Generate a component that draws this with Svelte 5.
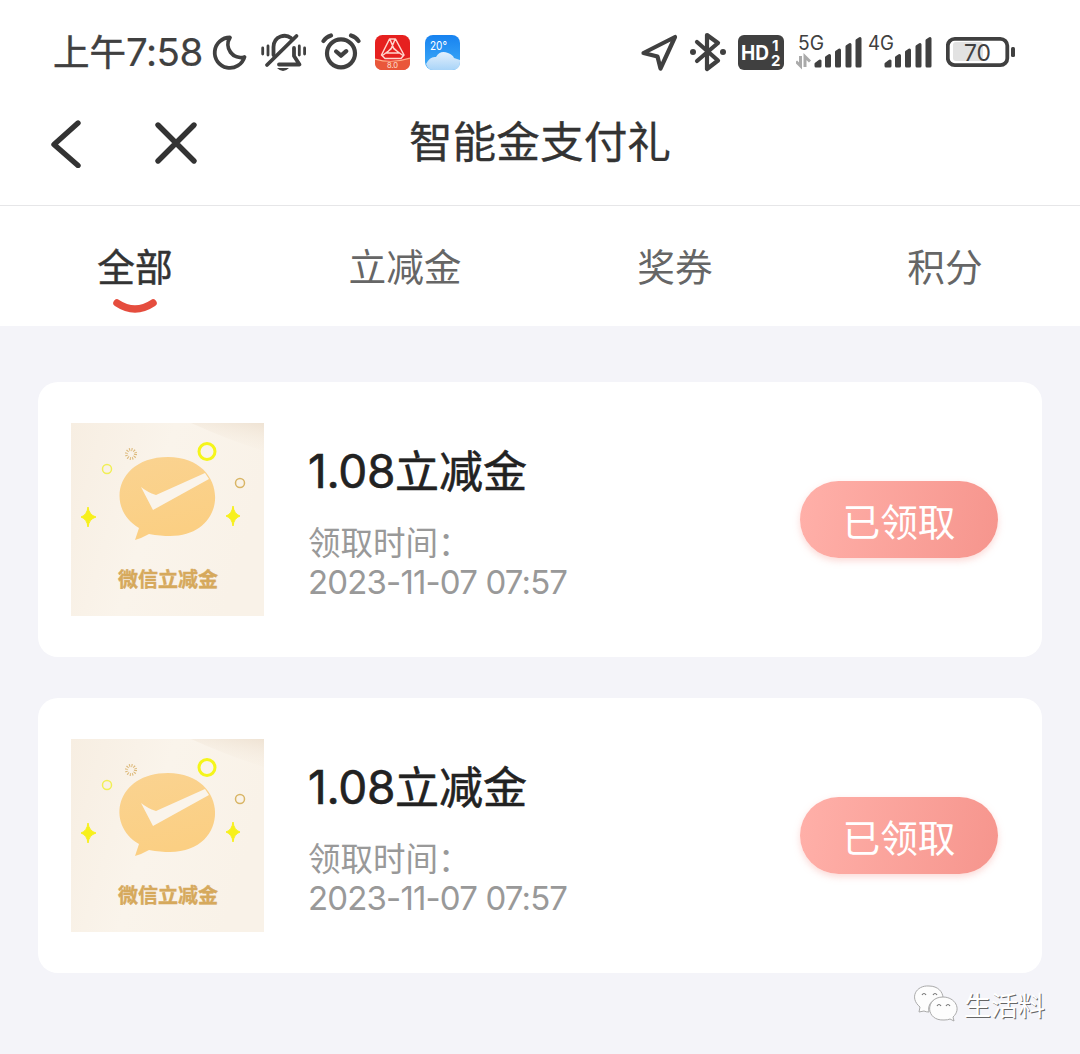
<script>
    const tabs = ['全部', '立减金', '奖券', '积分'];
    let active = $state('全部');

    const coupons = [
        { id: 1, title: '立减金', amount: '1.08', time: '2023-11-07 07:57', status: '已领取' },
        { id: 2, title: '立减金', amount: '1.08', time: '2023-11-07 07:57', status: '已领取' }
    ];

    const networks = ['5G', '4G'];
</script>

<main>
    <div class="status">
        <span class="clock">上午<b>7:58</b></span>
        <svg class="moon" width="36" height="44" viewBox="0 0 36 44">
            <path class="line" d="M18 7.5A15.2 15.2 0 1 0 32.5 27A13 13 0 0 1 18 7.5Z" />
        </svg>
        <svg class="mute" width="46" height="44" viewBox="0 0 46 44">
            <path class="line" d="M12.500 25V17C13 5 25 4 30 8M33 18V26L38.5 34.5H18" />
            <path class="line" d="M6 35L35.5 6" />
            <path class="line thin" d="M1.7 18v6M7 16v9M38.3 16v9M43.6 18v6" />
            <path fill="#404040" d="M16 38h12q-6 6-12 0z" />
        </svg>
        <svg class="alarm" width="40" height="44" viewBox="0 0 40 44">
            <circle class="line thick" cx="20" cy="23.3" r="14" />
            <path class="line thick" d="M2.5 11Q5 7 10 5.5M37.5 11Q35 7 30 5.5M15.2 21.5L20 25.7L25.2 21.2" />
        </svg>
        <svg class="app" width="35" height="35" viewBox="0 0 35 35">
            <rect width="35" height="35" rx="7.5" fill="#e6201f" />
            <path d="M0 24Q17 29 35 23V27.500Q35 35 27.500 35H7.500Q0 35 0 27.500Z" fill="#e9573a" />
            <path d="M0 24Q17 29 35 23" stroke="#ffb08a" stroke-width="1.200" fill="none" />
            <path d="M14.500 4H20.500L29 20L26 23.500H10L6.500 20ZM15 4.500L19 14L28 20.500M20 4.500L16 14L7.500 20.500M11.500 18H24L17.500 12Z" stroke="#ffd5cd" stroke-width="1.500" fill="none" stroke-linejoin="round" />
            <text x="17.500" y="33" font-size="7.500" text-anchor="middle" fill="#ffe3d8">8.0</text>
        </svg>
        <svg class="app weather" width="35" height="35" viewBox="0 0 35 35">
            <defs>
                <linearGradient id="sky" x2="0" y2="1"><stop stop-color="#1782f0" /><stop offset="1" stop-color="#40adf8" /></linearGradient>
                <linearGradient id="cloud" x2="0" y2="1"><stop stop-color="#e2effc" /><stop offset="1" stop-color="#a9d4f8" /></linearGradient>
            </defs>
            <rect width="35" height="35" rx="8" fill="url(#sky)" />
            <path d="M1 29Q5 21 11 22Q15 15 23 18Q28 20 29 23L35 25V27Q35 35 27 35H8Q3 35 1 29Z" fill="url(#cloud)" />
            <text x="5" y="15" font-size="12" fill="#fff" textLength="17" lengthAdjust="spacingAndGlyphs">20°</text>
        </svg>

        <svg class="locate" width="40" height="44" viewBox="0 0 40 44">
            <path class="line thick" d="M3.500 23L35 7L20.500 38.500L17.500 26.500Z" />
        </svg>
        <svg class="bluetooth" width="38" height="44" viewBox="0 0 38 44">
            <path class="line thick" d="M8 12L29 30.500L18 39V5L29 13L8 31" />
            <circle cx="4" cy="22" r="3" fill="#404040" />
            <circle cx="34" cy="22" r="3" fill="#404040" />
        </svg>
        <svg class="hd" width="46" height="35" viewBox="0 0 46 35">
            <rect width="46" height="35" rx="6" fill="#404040" />
            <text x="3" y="24.500" font-size="20" textLength="28" lengthAdjust="spacingAndGlyphs">HD</text>
            <text x="34" y="15.500" font-size="15">1</text>
            <text x="33" y="31" font-size="15">2</text>
        </svg>
        {#each networks as net, i}
            <svg class="signal" width="70" height="44" viewBox="0 0 70 44">
                <text x="2" y="20" font-size="19.500" fill="#404040" textLength="26" lengthAdjust="spacingAndGlyphs">{net}</text>
                {#if i === 0}
                    <path d="M4.500 26V36L0 31.500M9 37V26.500L14 31.500" fill="none" stroke="#aaa" stroke-width="3" />
                {/if}
                <path class="bars" d="M20 36V34l4-3v5zM30.500 36V27.500l3-2V36zM40.500 36V22l3-2V36zM51 36V16.500l3-2V36zM61 36V10.500l3-2V36z" />
            </svg>
        {/each}
        <svg class="battery" width="70" height="44" viewBox="0 0 70 44">
            <rect x="7" y="12" width="30" height="19" rx="3" fill="#e2e2e2" />
            <rect class="line" x="1.800" y="8.800" width="59.500" height="26.400" rx="7" />
            <rect x="65" y="17" width="4" height="10" rx="1.500" fill="#404040" />
            <text x="18" y="30.500" font-size="23.500" fill="#404040" textLength="27" lengthAdjust="spacingAndGlyphs">70</text>
        </svg>
    </div>

    <header>
        <button aria-label="返回">
            <svg width="32" height="48" viewBox="0 0 32 48"><path d="M28 3L4 24.500L28 45.500" /></svg>
        </button>
        <button class="close" aria-label="关闭">
            <svg width="44" height="44" viewBox="0 0 44 44"><path d="M4 4L40 40M40 4L4 40" /></svg>
        </button>
        <h1>智能金支付礼</h1>
    </header>

    <nav>
        {#each tabs as tab}
            <button class:active={active === tab} onclick={() => (active = tab)}>
                {tab}
                {#if active === tab}
                    <svg width="44" height="16" viewBox="0 0 44 16"><path d="M4 4Q22 16 40 4" /></svg>
                {/if}
            </button>
        {/each}
    </nav>

    <section>
        {#each coupons as coupon (coupon.id)}
            <article>
                <svg class="cover" width="193" height="193" viewBox="0 0 193 193">
                    <defs>
                        <linearGradient id="paper" x2="1" y2="0.3">
                            <stop stop-color="#f7eee2" />
                            <stop offset="0.5" stop-color="#faf4eb" />
                            <stop offset="1" stop-color="#f9f2e8" />
                        </linearGradient>
                        <linearGradient id="bubble" x2="0.3" y2="1">
                            <stop stop-color="#fad391" />
                            <stop offset="1" stop-color="#fbcf83" />
                        </linearGradient>
                        <linearGradient id="shine" x1="1" x2="0.5" y2="1">
                            <stop stop-color="#efe3d4" />
                            <stop offset="1" stop-color="#f8f0e5" stop-opacity="0" />
                        </linearGradient>
                    </defs>
                    <rect width="193" height="193" fill="url(#paper)" />
                    <path d="M120 0H193V28Q160 18 120 0Z" fill="url(#shine)" />
                    <path d="M64 117L68 105C34 85 45 34 97 34C159 34 160 113 99 113Q90 113 78 111Q71 115 64 117Z" fill="url(#bubble)" />
                    <path d="M70 64Q76 69 85 72L134 50L138 56L82 87Z" fill="#faf4eb" />
                    <circle cx="136" cy="28.500" r="8" stroke="#f5f51a" stroke-width="3" />
                    <circle cx="36" cy="46" r="4.500" stroke="#f1ef55" stroke-width="1.500" />
                    <circle cx="169" cy="60" r="4.500" stroke="#d9b565" stroke-width="1.500" />
                    <circle cx="60" cy="31" r="4.500" stroke="#dcb878" stroke-width="3" stroke-dasharray="1 1.350" />
                    <path d="M17 84Q18 92 25 94Q18 96 17 104Q16 96 10 94Q16 92 17 84ZM162 83Q163 91 169 93Q163 95 162 103Q161 95 155 93Q161 91 162 83Z" fill="#f7f01c" stroke="#f7f01c" />
                    <text x="47" y="163.500" textLength="100">微信立减金</text>
                </svg>
                <div class="info">
                    <h2><b>{coupon.amount}</b>{coupon.title}</h2>
                    <p>领取时间：</p>
                    <p class="time">{coupon.time}</p>
                </div>
                <button class="claim">{coupon.status}</button>
            </article>
        {/each}
    </section>

    <div class="mark">
        <svg width="46" height="40" viewBox="0 0 46 40">
            <path class="shade" d="M6 28L7 23C-4 14 3 1 16 2C25 2 30 8 30 14C20 14 14 20 16 28Q13 28 11 27Z" />
            <path class="shade" d="M30 13C12 13 12 37 31 36Q35 36 37 35L41 37L40 33C49 25 42 13 30 13Z" />
            <path class="eyes" d="M9 11q2-3 4 0M20 11q2-3 4 0M24 22q2-3 4 0M33 22q2-3 4 0" />
        </svg>
        <span>生活料</span>
    </div>
</main>

<style>
    :global(body){
        background-color: #f4f4f9;
    }
    main{
        width: 1080px;
        height: 1054px;
        overflow: hidden;
        position: relative;
        background-color: #f4f4f9;
        font-family: Inter, "Noto Sans CJK SC", sans-serif;
    }
    button{
        border: none;
        background: none;
        padding: 0;
        font-family: inherit;
        cursor: pointer;
    }
    h1, h2, p{
        margin: 0;
    }
    .status{
        box-sizing: border-box;
        height: 104px;
        padding-left: 53px;
        display: flex;
        align-items: center;
        background-color: white;
    }
    .status svg{
        flex-shrink: 0;
    }
    .clock{
        width: 158px;
        padding-bottom: 3px;
        font-size: 36.5px;
        color: #404040;
        white-space: nowrap;
        -webkit-text-stroke: 0.5px #404040;
    }
    .clock b{
        font-weight: 400;
        font-size: 38.5px;
        letter-spacing: -0.5px;
        -webkit-text-stroke-width: 0.2px;
    }
    .line{
        fill: none;
        stroke: #404040;
        stroke-width: 3.8;
        stroke-linecap: round;
        stroke-linejoin: round;
    }
    .line.thin{
        stroke-width: 2.8;
    }
    .line.thick{
        stroke-width: 4.2;
    }
    .moon{
        margin-left: 1px;
    }
    .mute{
        margin-left: 13px;
    }
    .alarm{
        margin-left: 14px;
    }
    .app{
        margin-left: 14px;
    }
    .weather{
        margin-left: 15px;
    }
    .locate{
        margin-left: 180px;
    }
    .bluetooth{
        margin-left: 9px;
    }
    .hd{
        margin-left: 11px;
    }
    .hd text{
        fill: white;
        font-weight: 700;
    }
    .signal{
        margin-left: 12px;
    }
    .signal + .signal{
        margin-left: 0;
    }
    .bars{
        fill: #404040;
        stroke: #404040;
        stroke-width: 3;
        stroke-linejoin: round;
    }
    .battery{
        margin-left: 10px;
    }

    header{
        box-sizing: border-box;
        height: 102px;
        padding: 15px 0 0 50px;
        display: flex;
        align-items: flex-start;
        background-color: white;
        border-bottom: 1px solid #e6e6e8;
    }
    header button{
        height: 50px;
        display: flex;
        align-items: center;
    }
    header .close{
        margin-left: 72px;
        height: 48px;
    }
    header path{
        fill: none;
        stroke: #333;
        stroke-width: 5.4;
        stroke-linecap: round;
        stroke-linejoin: round;
    }
    h1{
        width: 290px;
        margin-left: 197px;
        text-align: center;
        line-height: 48px;
        font-size: 43.7px;
        font-weight: 400;
        color: #333;
        -webkit-text-stroke: 0.3px #333;
    }

    nav{
        display: grid;
        grid-template-columns: repeat(4, 1fr);
        height: 120px;
        background-color: white;
    }
    nav button{
        display: flex;
        flex-direction: column;
        align-items: center;
        padding-top: 34px;
        font-size: 37.7px;
        line-height: 54px;
        color: #666;
    }
    nav .active{
        color: #333;
        -webkit-text-stroke: 0.5px #333;
    }
    nav svg{
        margin-top: 5px;
    }
    nav path{
        fill: none;
        stroke: #e54d3e;
        stroke-width: 7.5;
        stroke-linecap: round;
    }

    section{
        padding: 56px 38px 0;
        display: flex;
        flex-direction: column;
        gap: 41px;
    }
    article{
        box-sizing: border-box;
        height: 275px;
        padding: 0 44px 0 33px;
        display: flex;
        align-items: center;
        background-color: white;
        border-radius: 20px;
    }
    .cover circle{
        fill: none;
    }
    .cover text{
        font-size: 20px;
        font-weight: 700;
        fill: #d6a95c;
        stroke: #d6a95c;
        stroke-width: 0.4;
    }
    .info{
        flex: 1;
        margin-left: 44px;
        padding-top: 3px;
    }
    h2{
        font-size: 44px;
        line-height: 60px;
        font-weight: 400;
        color: #222;
        -webkit-text-stroke: 0.6px #222;
    }
    h2 b{
        font-size: 46px;
        font-weight: 400;
        letter-spacing: -0.3px;
    }
    .info p{
        font-size: 32.5px;
        line-height: 39px;
        color: #999;
    }
    .info h2 + p{
        margin-top: 22px;
    }
    .info .time{
        font-size: 33px;
        line-height: 38px;
        letter-spacing: -0.85px;
    }
    .claim{
        width: 198px;
        height: 77px;
        padding-bottom: 1px;
        border-radius: 39px;
        background: linear-gradient(100deg, #ffb0a9, #f6958d);
        box-shadow: 0 3px 7px rgba(246, 150, 140, 0.35);
        color: white;
        font-size: 37.7px;
    }

    .mark{
        position: absolute;
        left: 913px;
        top: 984px;
        display: flex;
        align-items: center;
        font-size: 27px;
        color: white;
    }
    .mark span{
        margin-left: 5px;
        text-shadow: 1px 1px 0 #666;
    }
    .shade{
        fill: #fdfdfd;
        stroke: #aaa;
        stroke-width: 1;
    }
    .eyes{
        fill: none;
        stroke: #777;
        stroke-width: 1.2;
    }
</style>
